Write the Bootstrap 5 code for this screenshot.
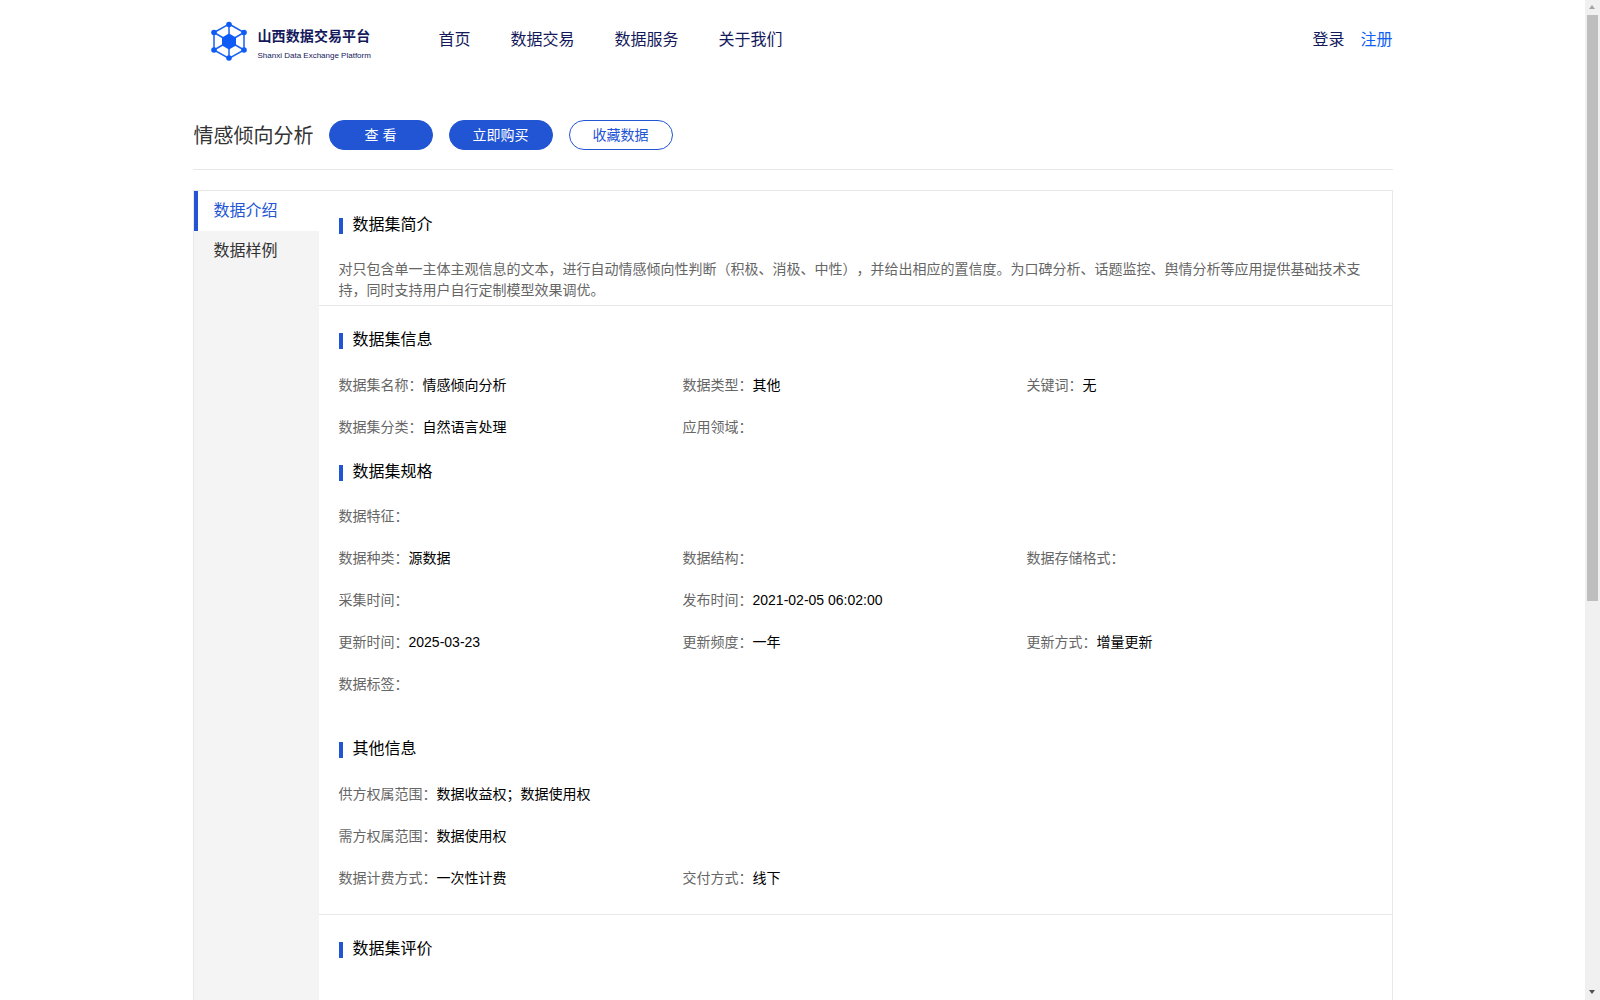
<!DOCTYPE html>
<html lang="zh-CN">

<head>
  <meta charset="UTF-8">
  <meta name="viewport" content="width=device-width, initial-scale=1.0">
  <title>情感倾向分析</title>
  <link rel="stylesheet" href="https://cdn.jsdelivr.net/npm/bootstrap@5.3.3/dist/css/bootstrap.min.css">
  <style>
    body {
      font-family: "Liberation Sans", "Noto Sans CJK SC", sans-serif;
      font-size: 14px;
      color: #000;
      padding-right: 15px;
      text-spacing-trim: space-all;
    }

    .page-wrap {
      width: 1200px;
    }

    .site-header {
      height: 80px;
    }

    .logo-box {
      width: 246px;
      padding: 21px 0 0 16px;
    }

    .logo-text {
      margin: 6px 0 0 1px;
    }

    .logo-name {
      font-size: 14px;
      font-weight: 700;
      line-height: 18px;
      letter-spacing: .1px;
      color: #14195c;
    }

    .logo-en {
      font-size: 8px;
      line-height: 11px;
      margin-top: 5px;
      color: #14195c;
      white-space: nowrap;
    }

    .top-nav {
      gap: 40px;
    }

    .top-link {
      font-size: 16px;
      color: #14195c;
      text-decoration: none;
    }

    .top-link.reg {
      color: #0f5ff5;
    }

    .title-bar {
      margin-top: 40px;
      padding-bottom: 19px;
      border-bottom: 1px solid #e8e8e8;
    }

    .title-bar h1 {
      font-size: 20px;
      font-weight: 400;
      line-height: 32px;
      height: 30px;
      color: #333;
      margin: 0 15px 0 1px;
    }

    .act-btn {
      width: 104px;
      height: 30px;
      padding: 0;
      font-size: 14px;
      line-height: 28px;
      border: 1px solid #2255d4;
      border-radius: 15px;
      background: #2255d4;
      color: #fff;
    }

    .act-btn.ghost {
      background: #fff;
      color: #2255d4;
    }

    .detail-box {
      margin-top: 20px;
      border: 1px solid #e8e8e8;
      border-bottom: 0;
    }

    .side-menu {
      width: 125px;
      flex-shrink: 0;
      background: #f4f4f4;
    }

    .side-item {
      height: 40px;
      line-height: 40px;
      padding-left: 20px;
      font-size: 16px;
      color: #333;
      text-decoration: none;
      display: block;
    }

    .side-item.on {
      padding-left: 16px;
      border-left: 4px solid #2255d4;
      background: #fff;
      color: #2255d4;
    }

    .main-col {
      min-width: 0;
    }

    .info-sec {
      padding: 22px 21px 0 20px;
      border-bottom: 1px solid #e8e8e8;
    }

    .info-sec:last-child {
      border-bottom: 0;
      min-height: 735px;
    }

    .sec-head {
      font-size: 16px;
      font-weight: 400;
      line-height: 24px;
      height: 22px;
      color: #000;
      margin: 0;
      padding-left: 14px;
      position: relative;
    }

    .sec-head::before {
      content: "";
      position: absolute;
      left: 0;
      top: 5px;
      width: 4px;
      height: 16px;
      background: #2255d4;
    }

    .sec-desc {
      margin: 24px 0 4px;
      line-height: 21px;
      color: #666;
    }

    .kv-rows {
      margin-top: 14px;
    }

    .kv-cell {
      height: 42px;
      line-height: 42px;
      white-space: nowrap;
    }

    .kv-cell span {
      color: #666;
    }

    .gap-a {
      margin-top: 12px;
    }

    .gap-b {
      margin-top: 13px;
    }

    .gap-c {
      margin-top: 32px;
    }

    .gap-d {
      margin-top: 14px;
      padding-bottom: 15px;
    }

    /* scrollbar of the reference, the headless window has none */
    .fake-scroll {
      position: fixed;
      top: 0;
      right: 0;
      bottom: 0;
      width: 15px;
      background: #f0f0f0;
    }

    .fake-thumb {
      position: absolute;
      top: 15px;
      left: 2px;
      width: 11px;
      height: 586px;
      background: #bebebe;
    }

    .fake-arrow {
      position: absolute;
      left: 4px;
      width: 0;
      height: 0;
      border-left: 3.5px solid transparent;
      border-right: 3.5px solid transparent;
    }

    .fake-arrow.up {
      top: 5px;
      border-bottom: 4px solid #a3a3a3;
    }

    .fake-arrow.down {
      bottom: 6px;
      border-top: 4px solid #505050;
    }
  </style>
</head>

<body>
  <div class="page-wrap mx-auto">
    <!-- Header -->
    <header class="site-header d-flex align-items-center">
      <div class="logo-box d-flex align-items-start gap-2 align-self-start">
        <svg width="40" height="40" viewBox="0 0 40 40" fill="none">
          <g stroke="#1a62f2" stroke-width="1.5">
            <path d="M20 3 L35 11.5 V29 L20 37.5 L5 29 V11.5 Z" />
            <path d="M20 3 V37.5 M5 11.5 L35 29 M35 11.5 L5 29" />
          </g>
          <path d="M20 12.5 L27 16.5 V24.5 L20 28.5 L13 24.5 V16.5 Z" fill="#0f5bf5" />
          <g fill="#0f5bf5">
            <circle cx="20" cy="3.5" r="2.8" />
            <circle cx="35" cy="11.5" r="2.8" />
            <circle cx="35" cy="29" r="2.8" />
            <circle cx="20" cy="37" r="2.8" />
            <circle cx="5" cy="29" r="2.8" />
            <circle cx="5" cy="11.5" r="2.8" />
          </g>
        </svg>
        <div class="logo-text">
          <div class="logo-name">山西数据交易平台</div>
          <div class="logo-en">Shanxi Data Exchange Platform</div>
        </div>
      </div>
      <nav class="top-nav d-flex">
        <a class="top-link" href="#">首页</a>
        <a class="top-link" href="#">数据交易</a>
        <a class="top-link" href="#">数据服务</a>
        <a class="top-link" href="#">关于我们</a>
      </nav>
      <div class="ms-auto d-flex gap-3">
        <a class="top-link" href="#">登录</a>
        <a class="top-link reg" href="#">注册</a>
      </div>
    </header>

    <!-- Title -->
    <div class="title-bar d-flex align-items-center">
      <h1>情感倾向分析</h1>
      <div class="d-flex gap-3">
        <button type="button" class="btn act-btn">查 看</button>
        <button type="button" class="btn act-btn">立即购买</button>
        <button type="button" class="btn act-btn ghost">收藏数据</button>
      </div>
    </div>

    <!-- Detail -->
    <div class="detail-box d-flex">
      <div class="side-menu">
        <a class="side-item on" href="#">数据介绍</a>
        <a class="side-item" href="#">数据样例</a>
      </div>
      <div class="main-col flex-grow-1">
        <section class="info-sec">
          <h2 class="sec-head">数据集简介</h2>
          <p class="sec-desc">对只包含单一主体主观信息的文本，进行自动情感倾向性判断（积极、消极、中性），并给出相应的置信度。为口碑分析、话题监控、舆情分析等应用提供基础技术支持，同时支持用户自行定制模型效果调优。</p>
        </section>

        <section class="info-sec">
          <h2 class="sec-head">数据集信息</h2>
          <div class="kv-rows row g-0">
            <div class="col-4 kv-cell"><span>数据集名称：</span>情感倾向分析</div>
            <div class="col-4 kv-cell"><span>数据类型：</span>其他</div>
            <div class="col-4 kv-cell"><span>关键词：</span>无</div>
            <div class="col-4 kv-cell"><span>数据集分类：</span>自然语言处理</div>
            <div class="col-8 kv-cell"><span>应用领域：</span></div>
          </div>

          <h2 class="sec-head gap-a">数据集规格</h2>
          <div class="row g-0 gap-b">
            <div class="col-12 kv-cell"><span>数据特征：</span></div>
            <div class="col-4 kv-cell"><span>数据种类：</span>源数据</div>
            <div class="col-4 kv-cell"><span>数据结构：</span></div>
            <div class="col-4 kv-cell"><span>数据存储格式：</span></div>
            <div class="col-4 kv-cell"><span>采集时间：</span></div>
            <div class="col-8 kv-cell"><span>发布时间：</span>2021-02-05 06:02:00</div>
            <div class="col-4 kv-cell"><span>更新时间：</span>2025-03-23</div>
            <div class="col-4 kv-cell"><span>更新频度：</span>一年</div>
            <div class="col-4 kv-cell"><span>更新方式：</span>增量更新</div>
            <div class="col-12 kv-cell"><span>数据标签：</span></div>
          </div>

          <h2 class="sec-head gap-c">其他信息</h2>
          <div class="row g-0 gap-d">
            <div class="col-12 kv-cell"><span>供方权属范围：</span>数据收益权；数据使用权</div>
            <div class="col-12 kv-cell"><span>需方权属范围：</span>数据使用权</div>
            <div class="col-4 kv-cell"><span>数据计费方式：</span>一次性计费</div>
            <div class="col-8 kv-cell"><span>交付方式：</span>线下</div>
          </div>
        </section>

        <section class="info-sec">
          <h2 class="sec-head">数据集评价</h2>
        </section>
      </div>
    </div>
  </div>

  <div class="fake-scroll">
    <div class="fake-arrow up"></div>
    <div class="fake-thumb"></div>
    <div class="fake-arrow down"></div>
  </div>

  <script src="https://cdn.jsdelivr.net/npm/bootstrap@5.3.3/dist/js/bootstrap.bundle.min.js"></script>
</body>

</html>
